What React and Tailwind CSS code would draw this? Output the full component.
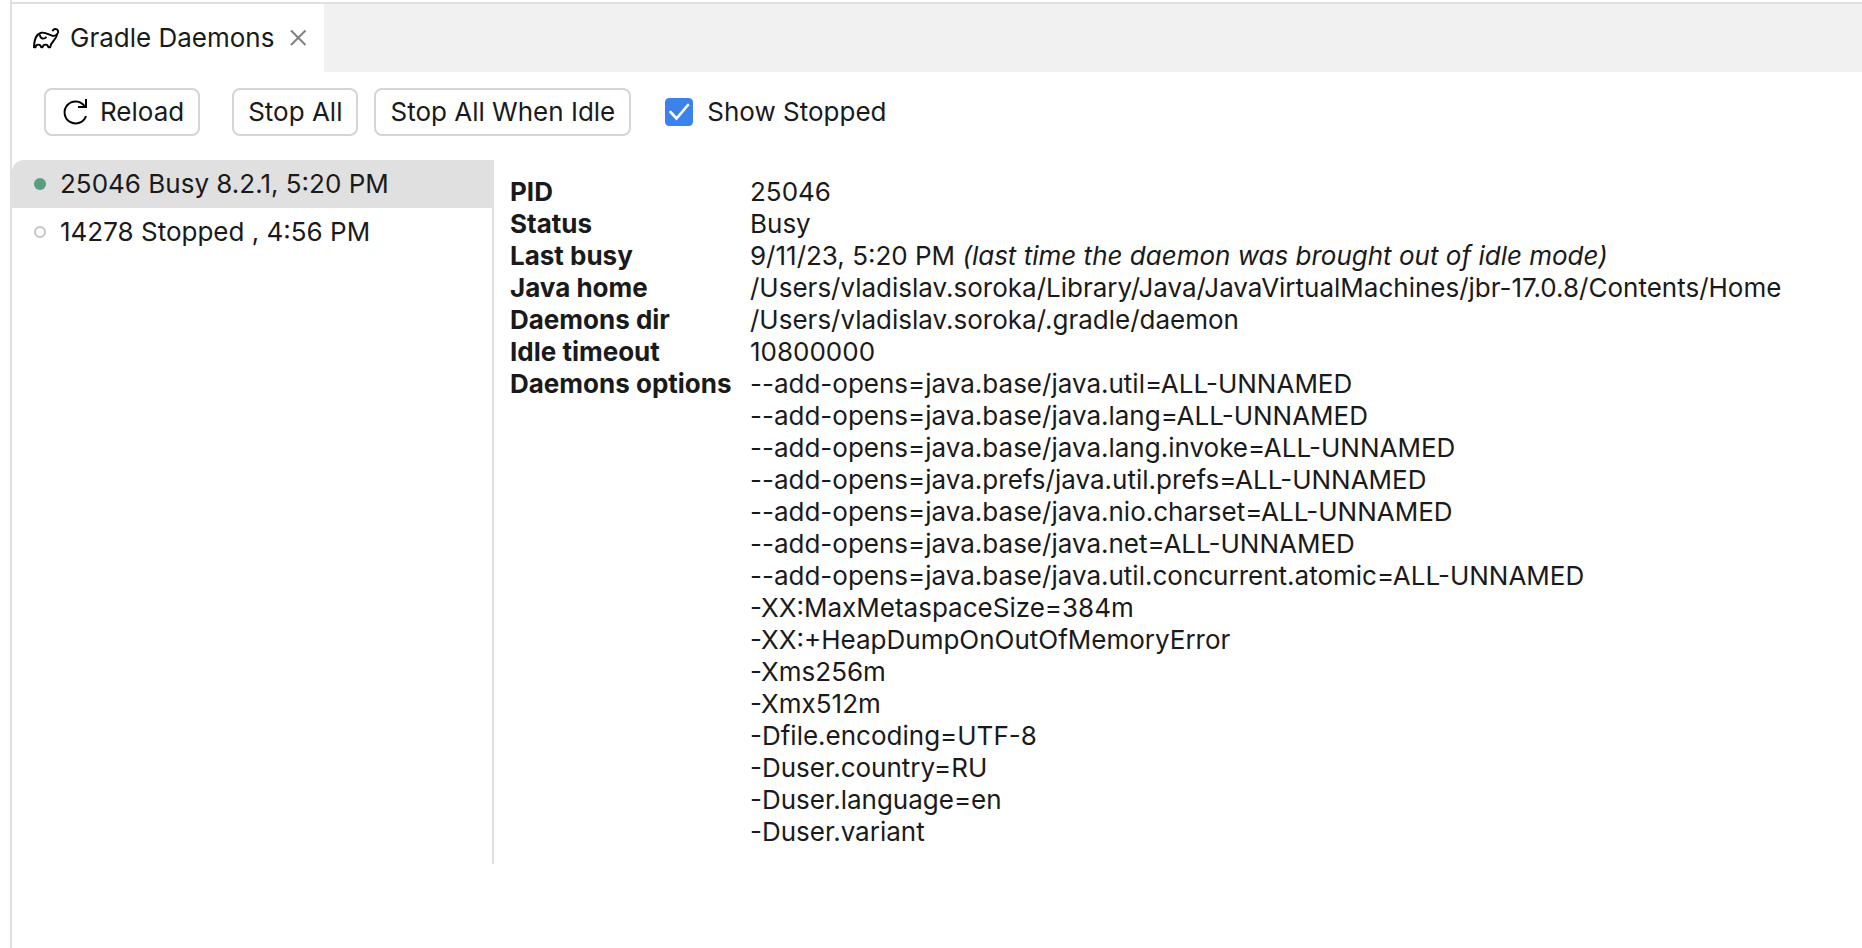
const options = [
  "--add-opens=java.base/java.util=ALL-UNNAMED",
  "--add-opens=java.base/java.lang=ALL-UNNAMED",
  "--add-opens=java.base/java.lang.invoke=ALL-UNNAMED",
  "--add-opens=java.prefs/java.util.prefs=ALL-UNNAMED",
  "--add-opens=java.base/java.nio.charset=ALL-UNNAMED",
  "--add-opens=java.base/java.net=ALL-UNNAMED",
  "--add-opens=java.base/java.util.concurrent.atomic=ALL-UNNAMED",
  "-XX:MaxMetaspaceSize=384m",
  "-XX:+HeapDumpOnOutOfMemoryError",
  "-Xms256m",
  "-Xmx512m",
  "-Dfile.encoding=UTF-8",
  "-Duser.country=RU",
  "-Duser.language=en",
  "-Duser.variant",
];

const details = [
  ["PID", "25046"],
  ["Status", "Busy"],
  [
    "Last busy",
    <>
      9/11/23, 5:20 PM <em>(last time the daemon was brought out of idle mode)</em>
    </>,
  ],
  ["Java home", "/Users/vladislav.soroka/Library/Java/JavaVirtualMachines/jbr-17.0.8/Contents/Home"],
  ["Daemons dir", "/Users/vladislav.soroka/.gradle/daemon"],
  ["Idle timeout", "10800000"],
  ["Daemons options", options.map((o) => <div key={o}>{o}</div>)],
];

function GradleIcon() {
  return (
    <svg className="size-8" viewBox="0 0 32 32" fill="none" stroke="#000" strokeWidth="1.9" strokeLinejoin="round" aria-hidden="true">
      <path d="M22.500 9.200C23.200 6.600 27.300 6.100 28.100 9C28.700 12 25.500 14.300 22.500 13.800C18.500 13 16 9.900 11.500 10.700C6.800 11.700 4 17 4 26" />
      <path d="M4 25.200H5.600C6 21.700 10.600 21.700 11.100 25.200H12.600C13.200 21.700 17.800 21.700 18.300 25.200H20.300C20.300 19.500 26.800 18.500 27.300 11.500" />
      <path d="M10 13C10.200 17 13.800 17.800 16.500 14.800" />
    </svg>
  );
}

function ReloadIcon() {
  return (
    <svg className="size-8" viewBox="0 0 32 32" fill="none" stroke="#000" strokeWidth="2" aria-hidden="true">
      <path d="M26 20A11 11 0 1 1 24.500 10" />
      <path d="M26 3V11H18" />
    </svg>
  );
}

const buttonClass =
  "flex h-12 items-center gap-2 rounded-lg border-2 border-[#d5d5d5] bg-white px-[14px] whitespace-nowrap";

export default function App() {
  return (
    <div className="flex min-h-screen bg-white pl-[10px] font-['Inter',sans-serif] text-[26px] leading-8 text-[#1a1a1a] [font-optical-sizing:none]">
      <div className="min-w-0 flex-1 border-l-2 border-[#e0e0e0] pt-[2px]">
        <header className="flex h-[70px] border-t-2 border-[#e0e0e0] bg-[#f1f1f1]">
          <div className="flex items-center gap-2 bg-white pr-[10px] pl-[18px]">
            <GradleIcon />
            <h1>Gradle Daemons</h1>
            <button type="button" aria-label="Close tab" className="flex size-8 items-center justify-center">
              <svg className="size-8" viewBox="0 0 32 32" stroke="#808080" strokeWidth="2" aria-hidden="true">
                <path d="M9 8.500L23.500 23M23.500 8.500L9 23" />
              </svg>
            </button>
          </div>
        </header>

        <div className="flex items-center px-8 py-4">
          <button type="button" className={buttonClass}>
            <ReloadIcon />
            Reload
          </button>
          <button type="button" className={buttonClass + " ml-8"}>Stop All</button>
          <button type="button" className={buttonClass + " ml-4"}>Stop All When Idle</button>
          <label className="ml-[34px] flex items-center gap-[14px] whitespace-nowrap">
            <span className="grid size-7">
              <input type="checkbox" defaultChecked className="peer col-start-1 row-start-1 size-7 appearance-none rounded border border-[#c4c4c4] checked:border-[#3b82ec] checked:bg-[#3b82ec]" />
              <svg className="pointer-events-none col-start-1 row-start-1 hidden size-7 peer-checked:block" viewBox="0 0 28 28" fill="none" stroke="#fff" strokeWidth="2.600" strokeLinecap="round" aria-hidden="true">
                <path d="M5.500 14L11.500 20.500L23 7" />
              </svg>
            </span>
            Show Stopped
          </label>
        </div>

        <main className="mt-2 flex">
          <ul className="w-[482px] shrink-0">
            <li className="flex h-12 items-center gap-[14px] rounded-tl-xl bg-[#e0e0e0] pl-[22px]">
              <span className="size-3 rounded-full bg-[#5a9e81]" />
              25046 Busy 8.2.1, 5:20 PM
            </li>
            <li className="flex h-12 items-center gap-[14px] pl-[22px]">
              <span className="size-3 rounded-full border-2 border-[#c4c4c4]" />
              14278 Stopped , 4:56 PM
            </li>
          </ul>
          <section className="-ml-[2px] flex-1 border-l-2 border-[#e0e0e0] py-4 pl-4">
            <table className="border-collapse text-left">
              <tbody>
                {details.map(([name, value]) => (
                  <tr key={name}>
                    <th scope="row" className="w-60 p-0 align-top font-bold whitespace-nowrap">{name}</th>
                    <td className="p-0 align-top">{value}</td>
                  </tr>
                ))}
              </tbody>
            </table>
          </section>
        </main>
      </div>
    </div>
  );
}
